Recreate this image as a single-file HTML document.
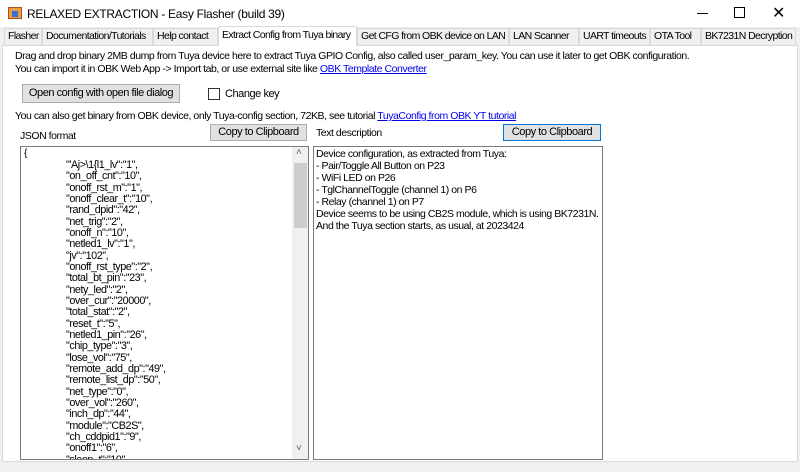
<!DOCTYPE html><html><head><style>
*{margin:0;padding:0;box-sizing:border-box}
body{width:800px;height:472px;background:#f0f0f0;font-family:"Liberation Sans",sans-serif;font-size:10.5px;letter-spacing:-0.45px;color:#000;position:relative;overflow:hidden}
.a{position:absolute;white-space:nowrap}
div{white-space:nowrap}
.title{left:0;top:0;width:800px;height:27px;background:#fff}
.tabs{left:0;top:27px;width:800px;height:18px;background:#f0f0f0}
.tab{position:absolute;top:28px;height:17px;border:1px solid #d9d9d9;border-bottom:none;background:#f0f0f0;line-height:15px;padding-left:3px;overflow:hidden;letter-spacing:-0.6px}
.content{left:2px;top:45px;width:796px;height:417px;background:#fff;border:1px solid #d9d9d9}
.btn{position:absolute;background:#e1e1e1;border:1px solid #adadad;text-align:center;font-size:11px}
.box{position:absolute;border:1px solid #7a7a7a;background:#fff}
a{color:#0000ee;text-decoration:underline}
.js{position:absolute;left:45px;top:13px;line-height:11.33px;font-size:10.8px}
</style></head><body>
<div class="a title"></div>
<div class="a" style="left:8px;top:7px;width:14px;height:12px;background:#e8a040;border:1px solid #b05020"></div>
<div class="a" style="left:12px;top:11px;width:6px;height:6px;background:#3a6fd0"></div>
<div class="a" style="left:27px;top:7px;font-size:12px;letter-spacing:-0.3px">RELAXED EXTRACTION - Easy Flasher (build 39)</div>
<div class="a" style="left:697px;top:13px;width:11px;height:1px;background:#000"></div>
<div class="a" style="left:734px;top:7px;width:11px;height:11px;border:1px solid #000"></div>
<div class="a" style="left:772px;top:3px;font-size:16px">✕</div>
<div class="a tabs"></div>
<div class="a content"></div>
<div class="tab" style="left:4px;width:38px">Flasher</div>
<div class="tab" style="left:42px;width:111px">Documentation/Tutorials</div>
<div class="tab" style="left:153px;width:65px">Help contact</div>
<div class="tab" style="left:218px;top:26px;height:20px;width:139px;background:#fff;z-index:2;padding-top:1px">Extract Config from Tuya binary</div>
<div class="tab" style="left:357px;width:152px">Get CFG from OBK device on LAN</div>
<div class="tab" style="left:509px;width:70px">LAN Scanner</div>
<div class="tab" style="left:579px;width:71px">UART timeouts</div>
<div class="tab" style="left:650px;width:51px">OTA Tool</div>
<div class="tab" style="left:701px;width:95px">BK7231N Decryption</div>
<div class="a" style="left:15px;top:50px;line-height:13px">Drag and drop binary 2MB dump from Tuya device here to extract Tuya GPIO Config, also called user_param_key. You can use it later to get OBK configuration.<br>You can import it in OBK Web App -&gt; Import tab, or use external site like <a>OBK Template Converter</a></div>
<div class="btn" style="left:22px;top:84px;width:158px;height:19px;line-height:17px">Open config with open file dialog</div>
<div class="a" style="left:208px;top:88px;width:12px;height:12px;border:1px solid #333;background:#fff"></div>
<div class="a" style="left:225px;top:88px;font-size:11px">Change key</div>
<div class="a" style="left:15px;top:110px">You can also get binary from OBK device, only Tuya-config section, 72KB, see tutorial <a>TuyaConfig from OBK YT tutorial</a></div>
<div class="a" style="left:20px;top:130px">JSON format</div>
<div class="btn" style="left:210px;top:124px;width:97px;height:17px;line-height:15px">Copy to Clipboard</div>
<div class="a" style="left:316px;top:127px">Text description</div>
<div class="btn" style="left:503px;top:124px;width:98px;height:17px;line-height:14px;border:1px solid #0078d7">Copy to Clipboard</div>
<div class="box" style="left:20px;top:146px;width:289px;height:314px;overflow:hidden">
<div class="a" style="left:3px;top:0px">{</div>
<div class="js">"'Aj&gt;\1{l1_lv":"1",<br>"on_off_cnt":"10",<br>"onoff_rst_m":"1",<br>"onoff_clear_t":"10",<br>"rand_dpid":"42",<br>"net_trig":"2",<br>"onoff_n":"10",<br>"netled1_lv":"1",<br>"jv":"102",<br>"onoff_rst_type":"2",<br>"total_bt_pin":"23",<br>"nety_led":"2",<br>"over_cur":"20000",<br>"total_stat":"2",<br>"reset_t":"5",<br>"netled1_pin":"26",<br>"chip_type":"3",<br>"lose_vol":"75",<br>"remote_add_dp":"49",<br>"remote_list_dp":"50",<br>"net_type":"0",<br>"over_vol":"260",<br>"inch_dp":"44",<br>"module":"CB2S",<br>"ch_cddpid1":"9",<br>"onoff1":"6",<br>"sleep_t":"10"</div>
<div class="a" style="left:271px;top:0;width:17px;height:312px;background:#f0f0f0"></div>
<div class="a" style="left:273px;top:16px;width:13px;height:65px;background:#cdcdcd"></div>
<div class="a" style="left:275px;top:0px;font-size:10px;color:#606060">˄</div>
<div class="a" style="left:275px;top:296px;font-size:10px;color:#606060">˅</div>
</div>
<div class="box" style="left:313px;top:146px;width:290px;height:314px;padding:1px 2px;line-height:12px;overflow:hidden">Device configuration, as extracted from Tuya:<br>- Pair/Toggle All Button on P23<br>- WiFi LED on P26<br>- TglChannelToggle (channel 1) on P6<br>- Relay (channel 1) on P7<br>Device seems to be using CB2S module, which is using BK7231N.<br>And the Tuya section starts, as usual, at 2023424</div>
</body></html>
